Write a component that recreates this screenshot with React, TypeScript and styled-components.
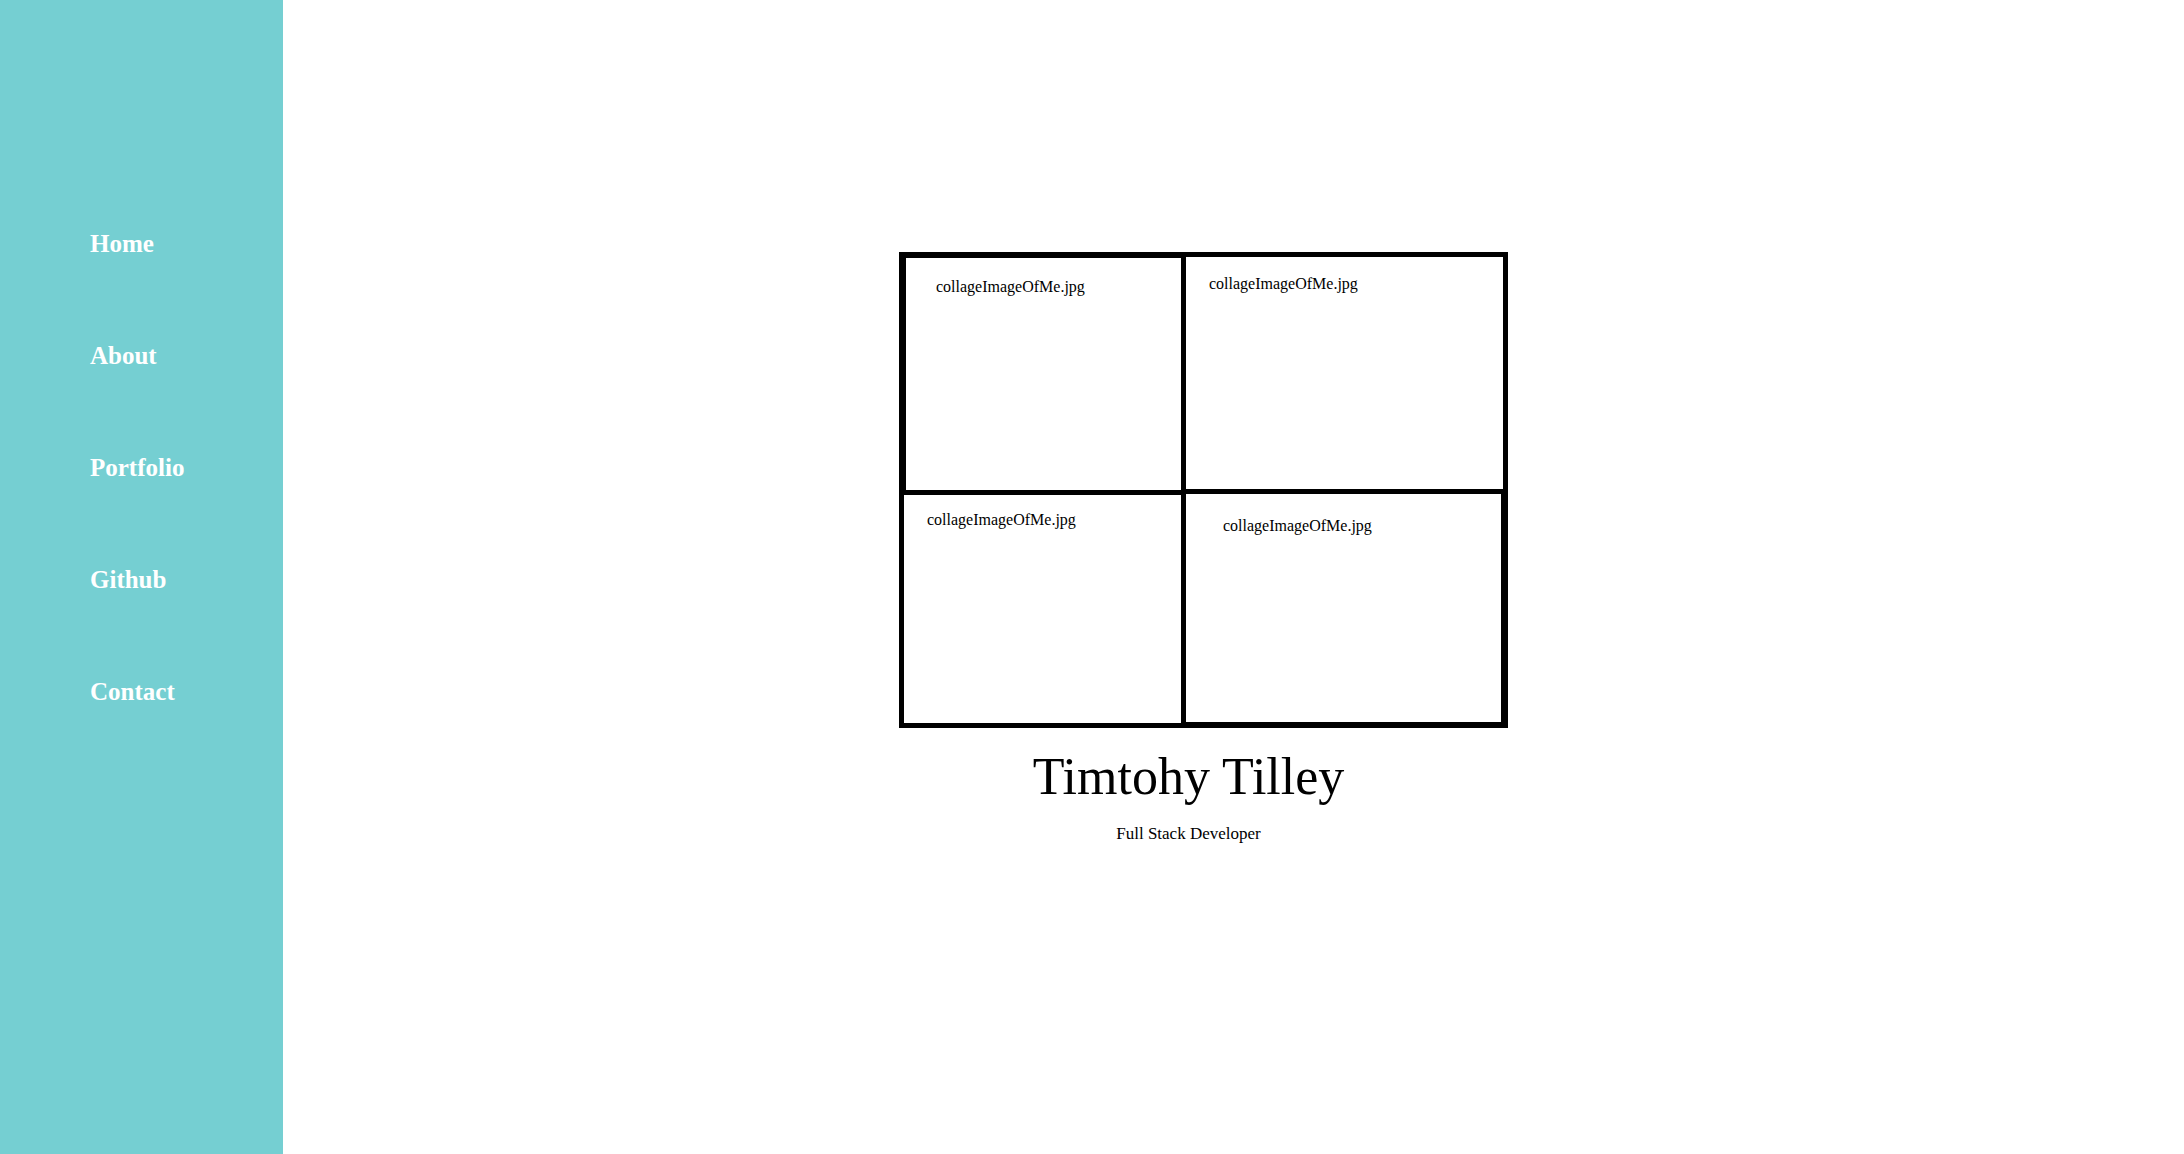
import React from "react";
import styled, { createGlobalStyle } from "styled-components";

const GlobalStyle = createGlobalStyle`
  * {
    box-sizing: border-box;
  }
  body {
    margin: 0;
    background: #ffffff;
    color: #000000;
    font-family: "Liberation Serif", serif;
  }
`;

const Page = styled.div`
  display: flex;
  min-height: 100vh;
`;

const Sidebar = styled.nav`
  flex: none;
  width: 283px;
  padding: 228px 24px 0 90px;
  background: #75cfd2;
`;

const NavList = styled.ul`
  display: flex;
  flex-direction: column;
  align-items: flex-start;
  gap: 80px;
  margin: 0;
  padding: 0;
  list-style: none;
`;

const NavLink = styled.a`
  display: block;
  color: #ffffff;
  font-size: 25px;
  font-weight: 700;
  line-height: 32px;
  text-decoration: none;
`;

const Main = styled.main`
  flex: 1;
  display: flex;
  flex-direction: column;
  align-items: center;
  padding: 252px 60px 0 0;
`;

const Collage = styled.section`
  display: grid;
  grid-template-columns: 282px 317px;
  border: 5px solid #000000;
`;

const CollageColumn = styled.div<{ $divided?: boolean }>`
  display: flex;
  flex-direction: column;
  border-right: ${(p) => (p.$divided ? "5px solid #000000" : "none")};
`;

const Frame = styled.figure<{ $height: number; $border: string; $inset: string }>`
  height: ${(p) => p.$height}px;
  margin: 0;
  border: 0 solid #000000;
  border-width: ${(p) => p.$border};
  padding: ${(p) => p.$inset};
`;

const FrameLabel = styled.figcaption`
  font-size: 16px;
  line-height: 20px;
`;

const Intro = styled.header`
  display: flex;
  flex-direction: column;
  align-items: center;
  gap: 15px;
  padding: 19px 30px 0 0;
`;

const Name = styled.h1`
  margin: 0;
  font-size: 52px;
  font-weight: 400;
  line-height: 60px;
`;

const Role = styled.p`
  margin: 0;
  font-size: 17px;
  line-height: 24px;
`;

const links = ["Home", "About", "Portfolio", "Github", "Contact"];

const columns = [
  [
    { height: 238, border: "1px 0 5px 2px", inset: "19px 0 0 30px" },
    { height: 228, border: "0", inset: "15px 0 0 23px" },
  ],
  [
    { height: 237, border: "0 0 5px 0", inset: "17px 0 0 23px" },
    { height: 229, border: "0 2px 1px 0", inset: "22px 0 0 37px" },
  ],
];

export default function App() {
  return (
    <>
      <GlobalStyle />
      <Page>
        <Sidebar>
          <NavList>
            {links.map((label) => (
              <li key={label}>
                <NavLink href={`#${label.toLowerCase()}`}>{label}</NavLink>
              </li>
            ))}
          </NavList>
        </Sidebar>
        <Main>
          <Collage>
            {columns.map((frames, column) => (
              <CollageColumn key={column} $divided={column === 0}>
                {frames.map((frame, row) => (
                  <Frame
                    key={row}
                    $height={frame.height}
                    $border={frame.border}
                    $inset={frame.inset}
                  >
                    <FrameLabel>collageImageOfMe.jpg</FrameLabel>
                  </Frame>
                ))}
              </CollageColumn>
            ))}
          </Collage>
          <Intro>
            <Name>Timtohy Tilley</Name>
            <Role>Full Stack Developer</Role>
          </Intro>
        </Main>
      </Page>
    </>
  );
}
